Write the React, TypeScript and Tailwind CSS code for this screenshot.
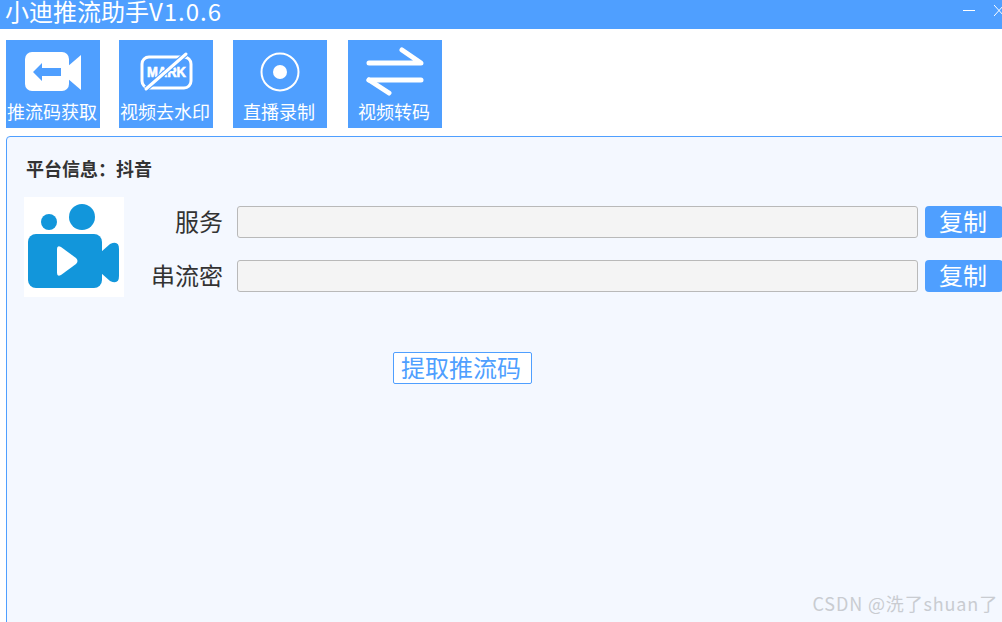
import React from "react";

const font = { fontFamily: '"Noto Sans CJK SC", "Noto Sans", sans-serif' };

function PushIcon() {
  return (
    <svg width="94" height="60" viewBox="0 0 94 60">
      <rect x="19" y="12" width="44" height="39" rx="7" fill="#fff" />
      <path d="M61 27 L75 15 V50 L61 38 Z" fill="#fff" />
      <path d="M27 32 L36 23 V28 H55 V36 H36 V41 Z" fill="#4f9fff" />
    </svg>
  );
}

function MarkIcon() {
  return (
    <svg width="94" height="60" viewBox="0 0 94 60">
      <rect x="23" y="17" width="49" height="31" rx="7" fill="none" stroke="#fff" strokeWidth="3" />
      <text
        x="28"
        y="37"
        textLength="39"
        lengthAdjust="spacingAndGlyphs"
        fill="#fff"
        stroke="#fff"
        strokeWidth="0.6"
        fontSize="14"
        fontWeight="700"
        fontFamily="Liberation Sans, sans-serif"
      >
        MARK
      </text>
      <path d="M27 49 L67 14" stroke="#4f9fff" strokeWidth="5" />
      <path d="M27 49 L67 14" stroke="#fff" strokeWidth="3" strokeLinecap="round" />
    </svg>
  );
}

function RecordIcon() {
  return (
    <svg width="94" height="60" viewBox="0 0 94 60">
      <circle cx="47" cy="32" r="18.5" fill="none" stroke="#fff" strokeWidth="2" />
      <circle cx="47" cy="32" r="7" fill="#fff" />
    </svg>
  );
}

function ConvertIcon() {
  return (
    <svg width="94" height="60" viewBox="0 0 94 60" fill="none" stroke="#fff" strokeWidth="5" strokeLinecap="round" strokeLinejoin="round">
      <path d="M21 23 H73 L54 10" />
      <path d="M21 40 H73" />
      <path d="M21 40 L41 53" />
    </svg>
  );
}

function VideoLogo() {
  return (
    <svg width="100" height="100" viewBox="0 0 100 100" className="shrink-0 bg-white">
      <circle cx="25" cy="25" r="8" fill="#1296db" />
      <circle cx="58" cy="20" r="13" fill="#1296db" />
      <rect x="4" y="37" width="74" height="54" rx="8" fill="#1296db" />
      <path d="M77 55 L86 47 Q95 43 95 52 V79 Q95 88 86 84 L77 76 Z" fill="#1296db" />
      <path d="M33 52 Q33 48 37 50 L52 61 Q55 64 52 67 L37 78 Q33 80 33 76 Z" fill="#fff" />
    </svg>
  );
}

const tools = [
  { label: "推流码获取", icon: <PushIcon />, cls: "" },
  { label: "视频去水印", icon: <MarkIcon />, cls: "ml-[19px]" },
  { label: "直播录制", icon: <RecordIcon />, cls: "ml-[20px]" },
  { label: "视频转码", icon: <ConvertIcon />, cls: "ml-[21px]" },
];

function FieldRow({ label }: { label: string }) {
  return (
    <div className="flex items-center h-8">
      <label className="w-[99px] pb-[2px] text-right text-2xl text-[#333333] leading-[30px] shrink-0">{label}</label>
      <input
        type="text"
        className="ml-[14px] w-[681px] h-8 shrink-0 bg-[#f4f4f4] border border-[#b9b9b9] rounded-[3px]"
      />
      <button className="ml-[7px] w-[78px] h-8 pb-[2px] pr-[2px] shrink-0 bg-[#4f9fff] text-white text-2xl leading-[30px] rounded-[4px]">复制</button>
    </div>
  );
}

export default function App() {
  return (
    <div className="relative w-[1002px] h-[622px] overflow-hidden bg-white" style={font}>
      {/* title bar */}
      <div className="h-[29px] bg-[#4f9fff] flex items-start justify-between">
        <span className="ml-[5px] text-white text-2xl leading-[22px] whitespace-nowrap">
          小迪推流助手<span className="tracking-[1px]">V1.0.6</span>
        </span>
        <div className="flex items-center shrink-0 -mr-[2px] mt-[5px]">
          <span className="block w-3 h-px bg-white" />
          <svg width="10" height="11" viewBox="0 0 10 11" className="ml-[19px]" stroke="#fff" strokeWidth="1">
            <path d="M0 0 L10 11 M10 0 L0 11" />
          </svg>
        </div>
      </div>

      {/* toolbar */}
      <div className="flex mt-[11px] ml-[6px]">
        {tools.map((t) => (
          <div key={t.label} className={`w-[94px] h-[88px] bg-[#4f9fff] flex flex-col items-center shrink-0 ${t.cls}`}>
            {t.icon}
            <span className="pr-[2px] text-white text-lg leading-[22px] whitespace-nowrap">{t.label}</span>
          </div>
        ))}
      </div>

      {/* panel */}
      <div className="mt-2 ml-[6px] w-[1010px] h-[500px] bg-[#f4f8ff] border border-[#4f9fff] rounded-tl-[4px] pt-[19px] pl-[17px]">
        <div className="ml-[2px] text-lg font-bold leading-[24px] text-[#333333]">平台信息：抖音</div>
        <div className="flex mt-[17px]">
          <VideoLogo />
          <div className="flex flex-col gap-[22px] mt-[9px]">
            <FieldRow label="服务" />
            <FieldRow label="串流密" />
          </div>
        </div>
        <button className="block mt-[55px] ml-[369px] w-[139px] h-8 pb-[2px] pr-[3px] bg-white border border-[#4f9fff] rounded-[2px] text-[#4f9fff] text-2xl leading-[26px]">提取推流码</button>
      </div>

      <span className="absolute right-[4px] top-[590px] text-lg tracking-[0.85px] leading-[26px] text-[#c9ccd1] whitespace-nowrap">CSDN @洗了shuan了</span>
    </div>
  );
}
